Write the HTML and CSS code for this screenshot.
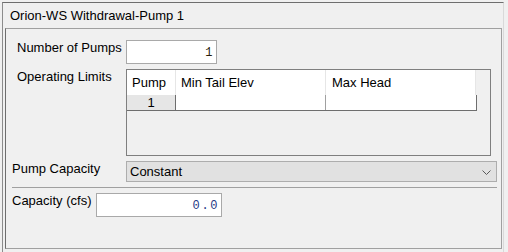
FILE: index.html
```html
<!DOCTYPE html>
<html>
<head>
<meta charset="utf-8">
<link rel="stylesheet" href="styles.css">
</head>
<body>
<div class="frame">
  <div class="title">Orion-WS Withdrawal-Pump 1</div>
  <div class="panel">
    <div class="row r1">
      <div class="label w109">Number of Pumps</div>
      <div class="field f1"><span class="val v1">1</span></div>
    </div>
    <div class="row r2">
      <div class="label w109">Operating Limits</div>
      <div class="grid">
        <div class="ghead">
          <div class="hc c-pump">Pump</div>
          <div class="hc c-min">Min Tail Elev</div>
          <div class="hc c-max">Max Head</div>
        </div>
        <div class="grow">
          <div class="rh">1</div>
          <div class="dc c-min"></div>
          <div class="dc c-max2"></div>
        </div>
      </div>
    </div>
    <div class="row r3">
      <div class="label w114">Pump Capacity</div>
      <div class="select">
        <span>Constant</span>
        <svg class="chev" width="9" height="5" viewBox="0 0 9 5"><polyline points="0.5,0.5 4.5,4.5 8.5,0.5" fill="none" stroke="#5a5a5a" stroke-width="1"/></svg>
      </div>
    </div>
    <div class="sep"></div>
    <div class="row r4">
      <div class="label w84">Capacity (cfs)</div>
      <div class="field f2"><span class="val v2">0.0</span></div>
    </div>
  </div>
</div>
</body>
</html>
```
FILE: styles.css
```css
html, body {
  margin: 0;
  padding: 0;
  background: #f0f0f0;
  font-family: "Liberation Sans", Arial, sans-serif;
  font-size: 13px;
  color: #000;
}
.frame {
  margin: 2px 0 0 2px;
  width: 500px;
  height: 250px;
  border-top: 1px solid #6e6e6e;
  border-left: 1px solid #8c8c8c;
  border-right: 1px solid #d9d9d9;
  box-sizing: content-box;
}
.title {
  height: 25px;
  line-height: 25px;
  padding-left: 7px;
  white-space: nowrap;
}
.panel {
  margin-left: 2px;
  width: 497px;
  height: 221px;
  box-sizing: border-box;
  border: 1px solid #a0a0a0;
  border-left-color: #6e6e6e;
  padding-top: 11px;
}
.row {
  display: flex;
  align-items: flex-start;
}
.r1 { padding-left: 11px; }
.r2 { padding-left: 11px; margin-top: 5px; }
.r3 { padding-left: 6px; margin-top: 5px; }
.r4 { padding-left: 6px; margin-top: 5px; }
.label {
  line-height: 15px;
  white-space: nowrap;
  flex: none;
}
.w109 { width: 109px; }
.w114 { width: 114px; }
.w84 { width: 84px; }
.field {
  box-sizing: border-box;
  height: 24px;
  background: #fff;
  border: 1px solid #a9a9a9;
  text-align: right;
  padding: 3px 2px 0 0;
  font-family: "Liberation Mono", "Courier New", monospace;
  font-size: 12px;
  line-height: 19px;
  letter-spacing: 1.6px;
}
.f1 { width: 91px; }
.f2 { width: 126px; }
.v1 { color: #2a1e0c; }
.v2 { color: #1f3a86; }
.grid {
  box-sizing: border-box;
  width: 365px;
  height: 87px;
  border: 1px solid #7f7f7f;
  background: #f0f0f0;
}
.ghead {
  display: flex;
  height: 25px;
}
.hc {
  box-sizing: border-box;
  height: 25px;
  line-height: 25px;
  background: #fff;
  border-right: 1px solid #e6e6e6;
  padding-left: 5px;
  white-space: nowrap;
}
.c-pump { width: 49px; }
.c-min { width: 150px; }
.c-max { width: 150px; padding-left: 6px; }
.grow {
  display: flex;
  box-sizing: border-box;
  width: 350px;
  height: 16px;
  border-bottom: 1px solid #6e6e6e;
  border-right: 1px solid #6e6e6e;
}
.rh {
  box-sizing: border-box;
  width: 49px;
  height: 15px;
  line-height: 15px;
  background: #e6e6e6;
  border-right: 1px solid #6e6e6e;
  text-align: center;
}
.dc {
  box-sizing: border-box;
  height: 15px;
  background: #fff;
  border-right: 1px solid #a0a0a0;
}
.c-max2 { flex: 1; border-right: none; }
.select {
  box-sizing: border-box;
  width: 371px;
  height: 21px;
  background: #e1e1e1;
  border: 1px solid #adadad;
  padding-left: 3px;
  line-height: 19px;
  display: flex;
  align-items: flex-start;
  justify-content: space-between;
}
.chev {
  margin: 8px 5px 0 0;
  flex: none;
}
.sep {
  margin: 5px 0 0 6px;
  width: 485px;
  height: 1px;
  background: #a0a0a0;
}
```
